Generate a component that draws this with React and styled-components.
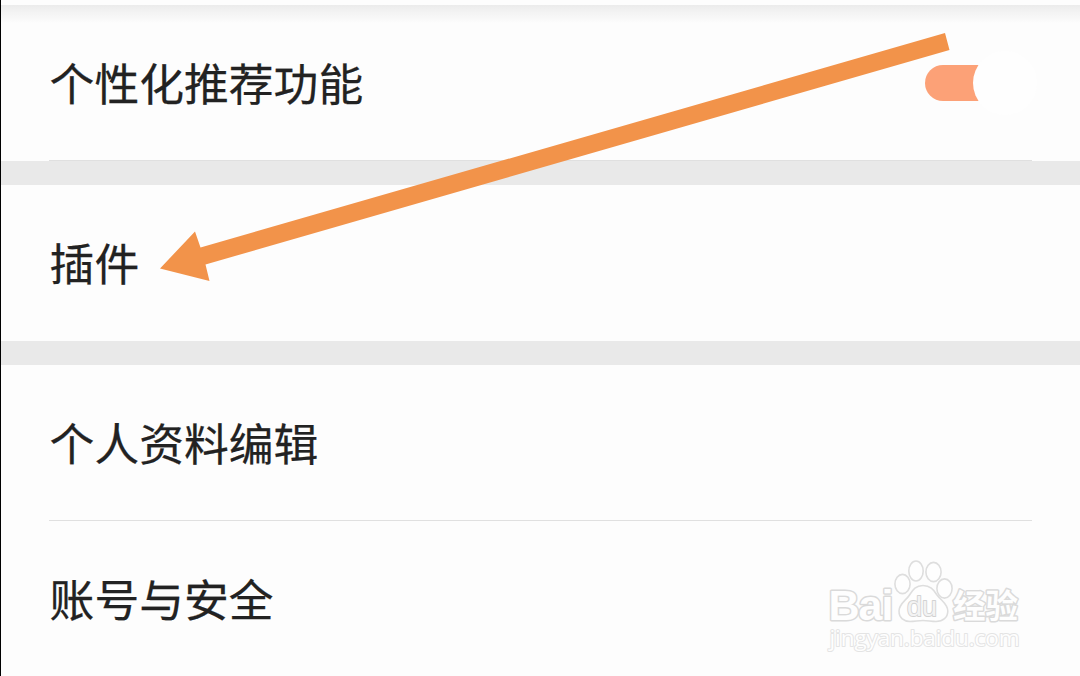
import styled, { createGlobalStyle } from 'styled-components';

const GlobalStyle = createGlobalStyle`
  * {
    box-sizing: border-box;
  }

  body {
    margin: 0;
    background-color: #fdfdfd;
    font-family: 'Liberation Sans', 'Noto Sans CJK SC', sans-serif;
  }
`;

const Screen = styled.main`
  position: relative;
  display: flex;
  flex-direction: column;
  width: 1080px;
  height: 676px;
  overflow: hidden;
  background-color: #fdfdfd;
  border-left: 1px solid #000;
`;

const HeaderShadow = styled.div`
  flex: none;
  height: 18px;
  margin-top: 5px;
  margin-bottom: -18px;
  background: linear-gradient(#ebebeb, #f3f3f3 40%, #f8f8f8 75%, #fdfdfd);
`;

const Group = styled.section`
  flex: none;

  & + & {
    border-top: 24px solid #e9e9e9;
  }
`;

const Row = styled.div`
  display: flex;
  align-items: center;
  justify-content: space-between;
  height: 156px;
  margin: 0 48px;
  border-bottom: 1px solid
    ${({ $divider }) => ($divider ? '#e0e0e0' : 'transparent')};
`;

const Label = styled.span`
  margin-bottom: 2px;
  padding-left: 0.6px;
  font-family: 'Noto Sans CJK SC', sans-serif;
  font-size: 44.8px;
  line-height: 64px;
  color: #222;
  -webkit-text-stroke: 0.25px #222;
`;

const Switch = styled.button`
  position: relative;
  width: 90px;
  height: 36px;
  margin-right: 17px;
  padding: 0;
  border: none;
  border-radius: 18px;
  background-color: #fca177;
`;

const Knob = styled.span`
  position: absolute;
  top: -14px;
  left: 48px;
  width: 64px;
  height: 64px;
  border-radius: 50%;
  background-color: #fefefe;
`;

const Arrow = styled.svg`
  position: absolute;
  top: 0;
  left: -1px;
  pointer-events: none;
`;

const Watermark = styled.svg`
  position: absolute;
  top: 550px;
  left: 809px;
  pointer-events: none;
`;

const PawShape = styled.g`
  fill: #fefefe;
  stroke: #dedede;
  stroke-width: 1.6px;
`;

const MarkText = styled.text`
  fill: #fefefe;
  stroke: #dadada;
  stroke-width: 3px;
  stroke-linejoin: round;
  paint-order: stroke;
  font-family: 'Liberation Sans', 'Noto Sans CJK SC', sans-serif;
  font-weight: 700;
`;

const PawText = styled(MarkText)`
  fill: #f3f3f3;
  stroke: #d2d2d2;
  stroke-width: 1.8px;
  font-weight: 400;
`;

const MarkUrl = styled(MarkText)`
  stroke: #e4e4e4;
  stroke-width: 2px;
  font-family: 'Open Sans', sans-serif;
  font-weight: 500;
`;

function PointerArrow() {
  return (
    <Arrow width="1080" height="676" viewBox="0 0 1080 676">
      <polygon
        points="160,268.5 195,231.5 200.5,247.5 945,33 949.5,50 205.5,264.5 209.5,281"
        fill="#f2934a"
      />
    </Arrow>
  );
}

function BaiduWatermark() {
  return (
    <Watermark width="230" height="120" viewBox="0 0 230 120">
      <MarkText x="18.5" y="70" fontSize="43" textLength="65">
        Bai
      </MarkText>
      <PawShape>
        <ellipse cx="92.5" cy="34" rx="7.6" ry="9.6" />
        <ellipse cx="106" cy="21" rx="7.2" ry="10" />
        <ellipse cx="123.5" cy="22" rx="7.6" ry="9.6" />
        <ellipse cx="134.5" cy="38.5" rx="7.6" ry="9.6" />
        <path d="M113 35.5c-7 0-10 4-13.500 9.500C96 50.500 89 54 89 61c0 7 5 10.500 11 10.500 5 0 8-1 13-1s8 1 13 1c7 0 11.800-4 11.800-10.500 0-7-6.300-10-10.800-16-3.500-5.500-7-9.500-14-9.500z" />
      </PawShape>
      <PawText x="97" y="65.5" fontSize="27" textLength="30">
        du
      </PawText>
      <MarkText x="143" y="68" fontSize="32.5" textLength="65">
        经验
      </MarkText>
      <MarkUrl x="19.5" y="96" fontSize="22.5" textLength="190">
        jingyan.baidu.com
      </MarkUrl>
    </Watermark>
  );
}

export default function App() {
  return (
    <>
      <GlobalStyle />
      <Screen>
        <HeaderShadow />
        <Group>
          <Row $divider>
            <Label>个性化推荐功能</Label>
            <Switch role="switch" aria-checked="true">
              <Knob />
            </Switch>
          </Row>
        </Group>
        <Group>
          <Row>
            <Label>插件</Label>
          </Row>
        </Group>
        <Group>
          <Row $divider>
            <Label>个人资料编辑</Label>
          </Row>
          <Row>
            <Label>账号与安全</Label>
          </Row>
        </Group>
        <PointerArrow />
        <BaiduWatermark />
      </Screen>
    </>
  );
}
